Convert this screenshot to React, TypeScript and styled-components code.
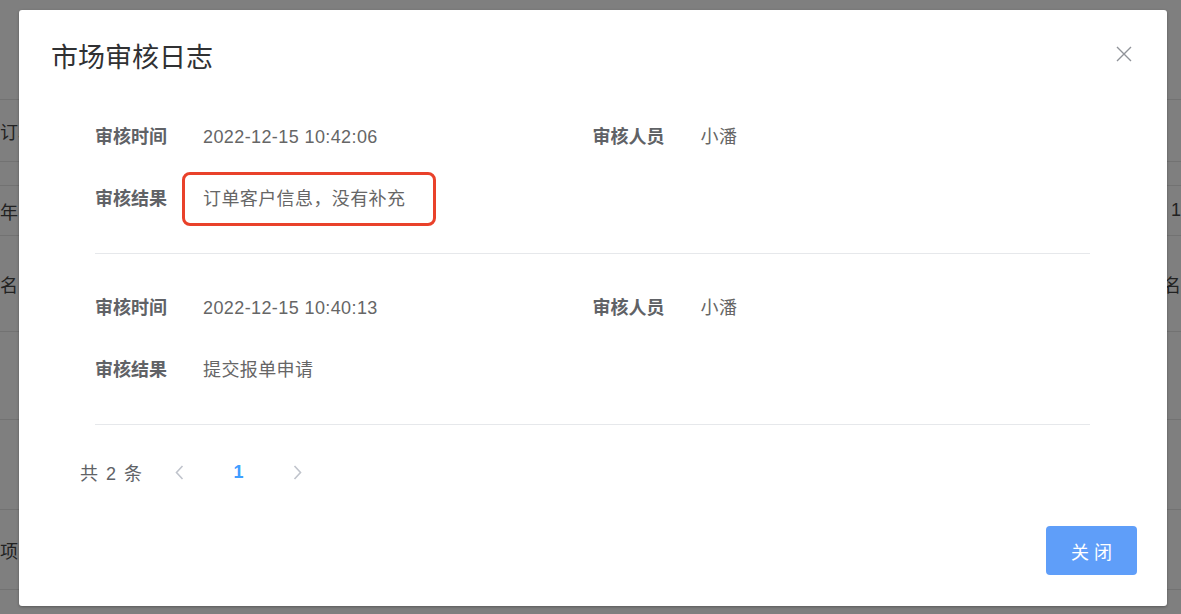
import styled, { createGlobalStyle } from "styled-components";

const GlobalStyle = createGlobalStyle`
  html, body {
    margin: 0;
    padding: 0;
  }
  body {
    font-family: "Helvetica Neue", "Liberation Sans", "Noto Sans CJK SC", sans-serif;
    background: #ffffff;
  }
  * {
    box-sizing: border-box;
  }
`;

interface LogEntry {
  time: string;
  operator: string;
  result: string;
  marked?: boolean;
}

const logs: LogEntry[] = [
  {
    time: "2022-12-15 10:42:06",
    operator: "小潘",
    result: "订单客户信息，没有补充",
    marked: true,
  },
  { time: "2022-12-15 10:40:13", operator: "小潘", result: "提交报单申请" },
];

// rows of the page that sits behind the dialog
const bgRows = [
  { h: 100, left: "", right: "" },
  { h: 62, left: "订单", right: "" },
  { h: 24, left: "", right: "" },
  { h: 50, left: "年 1", right: "1" },
  { h: 96, left: "名", right: "名" },
  { h: 88, left: "", right: "" },
  { h: 90, left: "", right: "" },
  { h: 80, left: "项", right: "" },
];

const ChevronLeft = () => (
  <svg width="9" height="15" viewBox="0 0 9 15" fill="none">
    <path d="M7.5 1 L1.5 7.5 L7.5 14" stroke="#c0c4cc" strokeWidth="1.6" />
  </svg>
);

const ChevronRight = () => (
  <svg width="9" height="15" viewBox="0 0 9 15" fill="none">
    <path d="M1.5 1 L7.5 7.5 L1.5 14" stroke="#c0c4cc" strokeWidth="1.6" />
  </svg>
);

const CloseIcon = () => (
  <svg width="16" height="16" viewBox="0 0 16 16" fill="none">
    <path d="M1 1 L15 15 M15 1 L1 15" stroke="#909399" strokeWidth="1.4" />
  </svg>
);

const App: React.FC = () => {
  return (
    <Page>
      <GlobalStyle />
      {bgRows.map(({ h, left, right }, index) => (
        <BgRow key={index} height={h}>
          <span>{left}</span>
          <span>{right}</span>
        </BgRow>
      ))}
      <Overlay>
        <Dialog>
          <DialogHeader>
            <Title>市场审核日志</Title>
            <CloseButton>
              <CloseIcon />
            </CloseButton>
          </DialogHeader>
          <DialogBody>
            {logs.map((log, index) => (
              <Entry key={index}>
                <Field>
                  <Label>审核时间</Label>
                  <Value>{log.time}</Value>
                </Field>
                <Field>
                  <Label>审核人员</Label>
                  <Value>{log.operator}</Value>
                </Field>
                <Field>
                  <Label>审核结果</Label>
                  <Value>
                    {log.marked ? <Marked>{log.result}</Marked> : log.result}
                  </Value>
                </Field>
              </Entry>
            ))}
          </DialogBody>
          <Pagination>
            <Total>共 2 条</Total>
            <PageButton>
              <ChevronLeft />
            </PageButton>
            <PageButton active>1</PageButton>
            <PageButton>
              <ChevronRight />
            </PageButton>
          </Pagination>
          <DialogFooter>
            <PrimaryButton>关 闭</PrimaryButton>
          </DialogFooter>
        </Dialog>
      </Overlay>
    </Page>
  );
};

const Page = styled.div`
  position: relative;
  width: 1181px;
  height: 614px;
  overflow: hidden;
  background: #ffffff;
`;

const BgRow = styled.div<{ height: number }>`
  height: ${({ height }) => height}px;
  border-bottom: 1px solid #e4e4e4;
  display: flex;
  align-items: center;
  justify-content: space-between;
  font-size: 18px;
  color: #444;
`;

const Overlay = styled.div`
  position: absolute;
  inset: 0;
  background: rgba(0, 0, 0, 0.5);
  padding: 10px 0 0 19px;
`;

const Dialog = styled.div`
  width: 1148px;
  height: 596px;
  background: #ffffff;
  border-radius: 3px;
  box-shadow: 0 1px 3px rgba(0, 0, 0, 0.3);
  display: flex;
  flex-direction: column;
`;

const DialogHeader = styled.div`
  position: relative;
  padding: 34px 32px 11px;
`;

const Title = styled.h2`
  margin: 0;
  font-size: 27px;
  line-height: 28px;
  font-weight: 400;
  color: #303133;
`;

const CloseButton = styled.button`
  position: absolute;
  top: 36px;
  right: 35px;
  width: 16px;
  height: 16px;
  padding: 0;
  border: none;
  background: none;
  display: flex;
`;

const DialogBody = styled.div`
  padding: 0 77px 0 76px;
`;

const Entry = styled.div`
  display: grid;
  grid-template-columns: 1fr 1fr;
  row-gap: 22px;
  padding: 34px 0;
  border-bottom: 1px solid #e6e8eb;
`;

const Field = styled.div`
  display: flex;
  align-items: center;
  height: 40px;
  font-size: 18px;
  line-height: 24px;
`;

const Label = styled.span`
  width: 108px;
  flex-shrink: 0;
  font-weight: 700;
  color: #606266;
`;

const Value = styled.span`
  color: #666666;
  letter-spacing: 0.4px;
`;

const Marked = styled.span`
  position: relative;
  &::after {
    content: "";
    position: absolute;
    inset: -17px -31px -17px -21px;
    border: 3px solid #e9412a;
    border-radius: 8px;
  }
`;

const Pagination = styled.div`
  display: flex;
  align-items: center;
  height: 34px;
  margin-top: 30px;
  padding-left: 61px;
`;

const Total = styled.span`
  width: 70px;
  font-size: 18px;
  word-spacing: 3px;
  color: #606266;
`;

const PageButton = styled.span<{ active?: boolean }>`
  width: 59px;
  display: flex;
  justify-content: center;
  align-items: center;
  font-size: 18px;
  font-weight: 700;
  color: ${({ active }) => (active ? "#409eff" : "#c0c4cc")};
`;

const DialogFooter = styled.div`
  margin-top: auto;
  display: flex;
  justify-content: flex-end;
  padding: 0 30px 31px;
`;

const PrimaryButton = styled.button`
  width: 91px;
  height: 49px;
  border: none;
  border-radius: 4px;
  background: #5f9ef9;
  color: #ffffff;
  font-family: inherit;
  font-size: 18px;
`;

export default App;
